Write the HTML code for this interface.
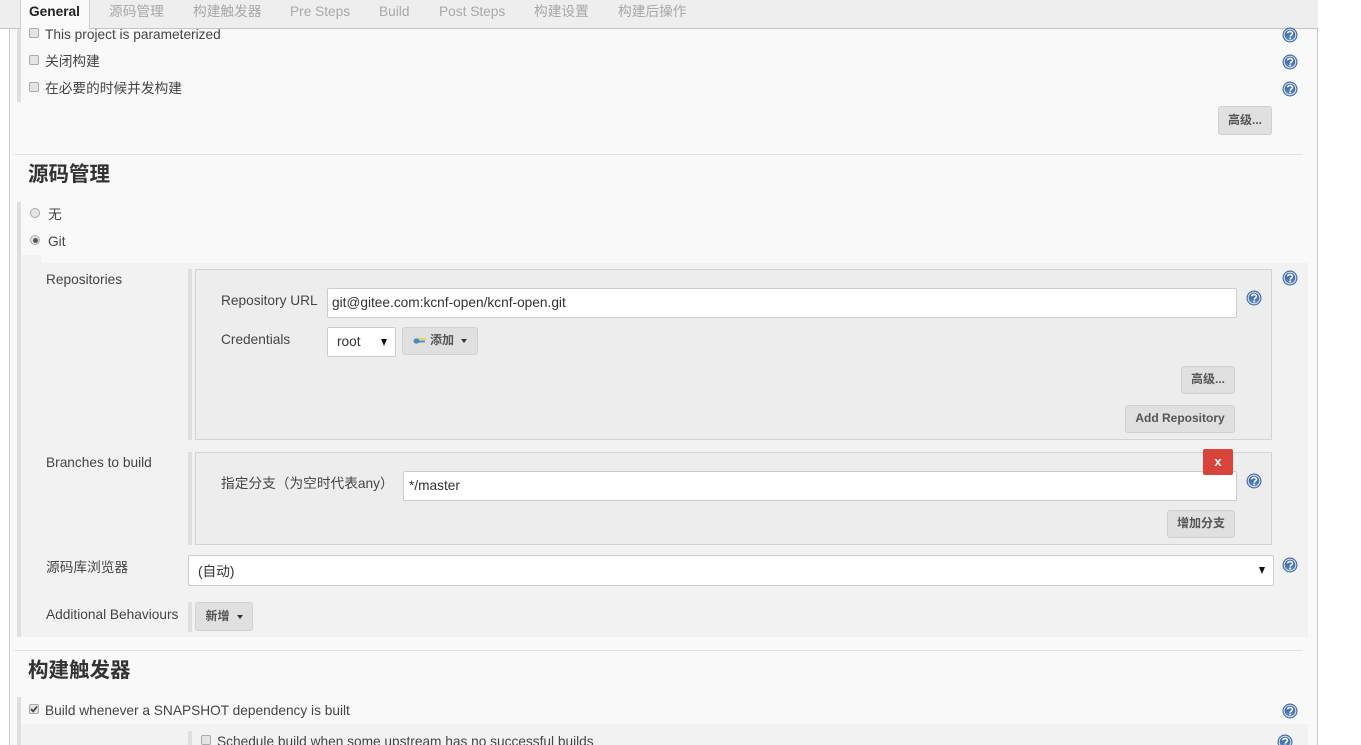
<!DOCTYPE html>
<html><head><meta charset="utf-8">
<style>
html,body{margin:0;padding:0;width:1361px;height:745px;overflow:hidden;background:#fff}
body{position:relative;font-family:"Liberation Sans","Noto Sans CJK SC",sans-serif;font-size:13.7px;color:#333}
div,span.a{position:absolute;box-sizing:border-box}
.t{white-space:nowrap;line-height:18px;color:#454545;margin-top:1px}
.tab{top:3px;white-space:nowrap;line-height:18px;color:#a8a8a8;font-size:13.7px}
.bar{background:#dfdfdf;width:4px}
.box{background:#ededed;border:1px solid #d3d3d3}
.in{background:#fff;border:1px solid #ccc;border-radius:2px;color:#333;line-height:26px;white-space:nowrap;font-size:13.7px}
.btn{background:#e0e0e0;border:1px solid #d0d0d0;border-radius:3px;color:#555;font-size:12px;font-weight:bold;text-align:center;white-space:nowrap}
.h{font-size:20.5px;font-weight:bold;color:#333;line-height:26px;white-space:nowrap}
.hr{height:1px;background:#e2e2e2;left:14px;width:1289px}
.cb{width:10px;height:10px;background:#e4e4e4;border:1px solid #aaa;border-radius:2px}
.rd{width:10px;height:10px;background:#e4e4e4;border:1px solid #aaa;border-radius:50%}
svg.q{position:absolute;width:16px;height:16px}
.caret{display:inline-block;width:0;height:0;border-left:3.5px solid transparent;border-right:3.5px solid transparent;border-top:4px solid #333;vertical-align:middle;margin-left:7px}
</style></head><body>
<svg width="0" height="0" style="position:absolute"><defs><linearGradient id="g" x1="0" y1="0" x2="0" y2="1"><stop offset="0" stop-color="#2f5a98"/><stop offset="1" stop-color="#5f8cc2"/></linearGradient><symbol id="h" viewBox="0 0 16 16"><circle cx="8" cy="8" r="7.5" fill="#4a6fa5"/><circle cx="8" cy="8" r="6.3" fill="#d8e3f0"/><circle cx="8" cy="8" r="5.3" fill="url(#g)"/><path d="M5.6 6.4C5.7 3.9 10.5 3.9 10.5 6.4 10.5 8 8.2 7.8 8.2 9.6" fill="none" stroke="#eef3f9" stroke-width="1.7"/><rect x="7.3" y="10.5" width="1.8" height="1.8" fill="#eef3f9"/></symbol></defs></svg>

<div style="left:9px;top:0;width:1309px;height:745px;background:#f9f9f9;border-left:1px solid #ccc;border-right:1px solid #ccc"></div>
<div style="left:0;top:0;width:1318px;height:29px;background:#eee;border-bottom:1px solid #c4c4c4"></div>
<div style="left:20px;top:-1px;width:70px;height:30px;background:#fafafa;border:1px solid #d0d0d0;border-bottom:0"></div>
<div class="tab" style="left:29px;color:#222;font-weight:bold">General</div>
<div class="tab" style="left:109px">源码管理</div>
<div class="tab" style="left:193px">构建触发器</div>
<div class="tab" style="left:290px">Pre Steps</div>
<div class="tab" style="left:379px">Build</div>
<div class="tab" style="left:439px">Post Steps</div>
<div class="tab" style="left:534px">构建设置</div>
<div class="tab" style="left:618px">构建后操作</div>

<div class="bar" style="left:17px;top:29px;height:73px"></div>
<div class="cb" style="left:29px;top:28px"></div><div class="t" style="left:45px;top:25px">This project is parameterized</div>
<div class="cb" style="left:29px;top:55px"></div><div class="t" style="left:45px;top:52px">关闭构建</div>
<div class="cb" style="left:29px;top:82px"></div><div class="t" style="left:45px;top:79px">在必要的时候并发构建</div>
<svg class="q" style="left:1282px;top:27px"><use href="#h"/></svg>
<svg class="q" style="left:1282px;top:54px"><use href="#h"/></svg>
<svg class="q" style="left:1282px;top:81px"><use href="#h"/></svg>
<div class="btn" style="left:1218px;top:106px;width:54px;height:29px;line-height:26px">高级...</div>

<div class="hr" style="top:154px"></div>
<div class="h" style="left:28px;top:162px">源码管理</div>

<div class="bar" style="left:17px;top:202px;height:435px"></div>
<div class="rd" style="left:30px;top:208px"></div><div class="t" style="left:48px;top:205px">无</div>
<div class="rd" style="left:30px;top:235px"></div><div style="left:33px;top:238px;width:5px;height:5px;border-radius:50%;background:#555"></div><div class="t" style="left:48px;top:232px">Git</div>

<div style="left:21px;top:263px;width:1287px;height:374px;background:#f2f2f2"></div>
<div style="left:21px;top:255px;width:21px;height:8px;background:#f2f2f2"></div>
<div class="t" style="left:46px;top:270px">Repositories</div>
<div class="bar" style="left:188px;top:269px;height:171px"></div>
<div class="box" style="left:195px;top:269px;width:1077px;height:171px"></div>
<svg class="q" style="left:1282px;top:270px"><use href="#h"/></svg>
<div class="t" style="left:221px;top:291px">Repository URL</div>
<div class="in" style="left:327px;top:288px;width:910px;height:30px;line-height:27px;padding-left:4px">git@gitee.com:kcnf-open/kcnf-open.git</div>
<svg class="q" style="left:1246px;top:290px"><use href="#h"/></svg>
<div class="t" style="left:221px;top:330px">Credentials</div>
<div class="in" style="left:327px;top:327px;width:69px;height:30px;line-height:27px;padding-left:9px">root</div>
<div style="left:381px;top:339px;width:0;height:0;border-left:3.5px solid transparent;border-right:3.5px solid transparent;border-top:7px solid #111"></div>
<div class="btn" style="left:402px;top:327px;width:76px;height:28px;line-height:25px;text-align:left;padding-left:27px">添加<span class="caret"></span></div>
<svg style="position:absolute;left:412px;top:336px" width="16" height="10"><path d="M6 3H14" stroke="#e8d95a" stroke-width="2"/><path d="M4 5.5H13" stroke="#5b8fc0" stroke-width="2"/><ellipse cx="4.5" cy="5" rx="3" ry="2.6" fill="#4f86bd"/></svg>
<div class="btn" style="left:1181px;top:366px;width:54px;height:28px;line-height:25px">高级...</div>
<div class="btn" style="left:1125px;top:405px;width:110px;height:28px;line-height:25px">Add Repository</div>

<div class="t" style="left:46px;top:453px">Branches to build</div>
<div class="bar" style="left:188px;top:452px;height:93px"></div>
<div class="box" style="left:195px;top:452px;width:1077px;height:93px"></div>
<div class="t" style="left:221px;top:474px">指定分支（为空时代表any）</div>
<div class="in" style="left:403px;top:471px;width:834px;height:30px;line-height:27px;padding-left:5px">*/master</div>
<div style="left:1203px;top:449px;width:30px;height:26px;background:#d9443a;border-radius:2px;color:#f5f5f5;font-weight:bold;font-size:13px;text-align:center;line-height:25px">x</div>
<svg class="q" style="left:1246px;top:473px"><use href="#h"/></svg>
<div class="btn" style="left:1167px;top:510px;width:68px;height:28px;line-height:25px">增加分支</div>

<div class="t" style="left:46px;top:558px">源码库浏览器</div>
<div class="in" style="left:188px;top:555px;width:1086px;height:31px;line-height:31px;padding-left:9px">(自动)</div>
<div style="left:1259px;top:567px;width:0;height:0;border-left:3.5px solid transparent;border-right:3.5px solid transparent;border-top:7px solid #111"></div>
<svg class="q" style="left:1282px;top:557px"><use href="#h"/></svg>

<div class="t" style="left:46px;top:605px">Additional Behaviours</div>
<div class="bar" style="left:188px;top:602px;height:30px"></div>
<div class="btn" style="left:195px;top:602px;width:58px;height:29px;line-height:26px">新增<span class="caret"></span></div>

<div class="hr" style="top:650px"></div>
<div class="h" style="left:28px;top:658px">构建触发器</div>

<div class="bar" style="left:17px;top:697px;height:48px"></div>
<div class="cb" style="left:29px;top:704px"></div>
<svg style="position:absolute;left:29px;top:704px" width="10" height="10"><path d="M2 5L4.2 7.4 8 2.5" fill="none" stroke="#444" stroke-width="1.7"/></svg>
<div class="t" style="left:45px;top:701px">Build whenever a SNAPSHOT dependency is built</div>
<svg class="q" style="left:1282px;top:703px"><use href="#h"/></svg>
<div style="left:21px;top:724px;width:1287px;height:21px;background:#f2f2f2"></div>
<div class="bar" style="left:188px;top:731px;height:14px"></div>
<div class="cb" style="left:201px;top:735px"></div>
<div class="t" style="left:217px;top:732px">Schedule build when some upstream has no successful builds</div>
<svg class="q" style="left:1277px;top:734px"><use href="#h"/></svg>
</body></html>
